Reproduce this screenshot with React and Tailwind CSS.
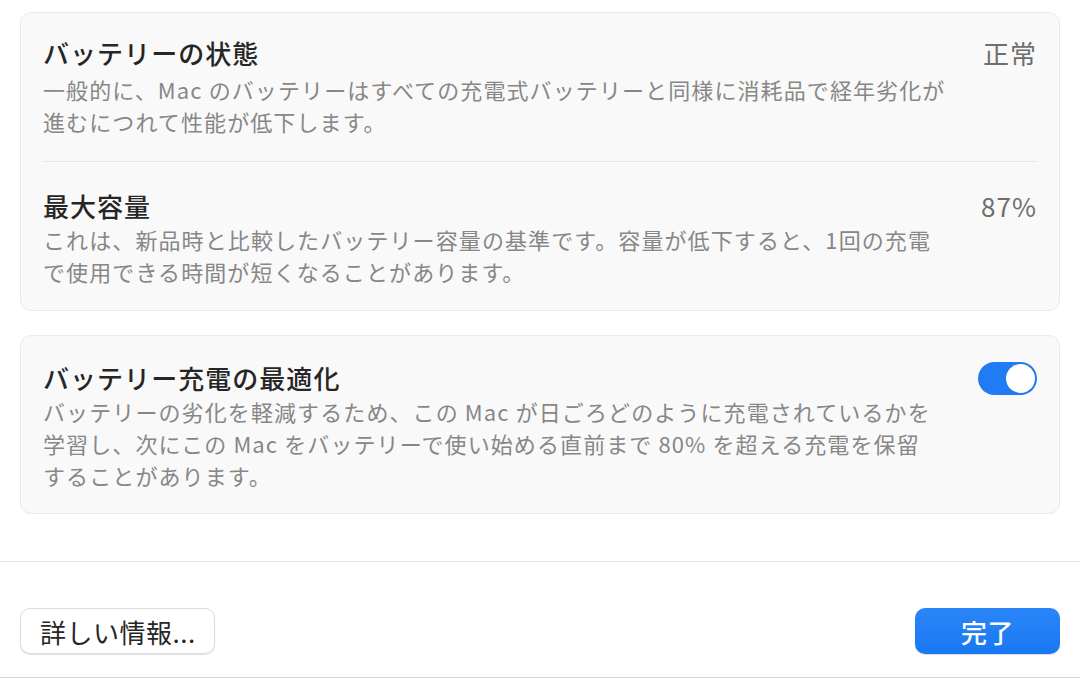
const FONT = { fontFamily: '"Noto Sans CJK JP", "Noto Sans", sans-serif' };

function Toggle() {
  return (
    <div className="flex h-[33px] w-[59px] shrink-0 items-center justify-end rounded-full bg-[#1f7cf4] p-[2px]">
      <div className="h-[29px] w-[29px] rounded-full bg-white shadow-[0_0_1px_rgba(0,0,0,0.25)]" />
    </div>
  );
}

function Lines({ lines, className }) {
  return (
    <div className={className}>
      {lines.map((l) => (
        <div key={l} className="whitespace-nowrap">{l}</div>
      ))}
    </div>
  );
}

export default function App() {
  const title = "text-[26px] leading-[32px] tracking-[0.04em] font-medium text-[#262626]";
  const desc = "text-[22px] leading-[32px] tracking-[0.05em] text-[#878787]";
  const value = "text-[26px] leading-[32px] tracking-[0.04em] text-[#6e6e6e]";

  return (
    <div className="flex h-[678px] w-[1080px] flex-col bg-white" style={FONT}>
      <div className="flex flex-col gap-[24px] px-5 pt-3">
        <div className="rounded-[11px] border border-[#e9e9e9] bg-[#f9f9f9] px-[22px]">
          <div className="pt-[24px] pb-[24px]">
            <div className="flex items-start justify-between">
              <div className={title}>バッテリーの状態</div>
              <div className={value}>正常</div>
            </div>
            <Lines
              className={desc + " mt-[4px]"}
              lines={[
                "一般的に、Mac のバッテリーはすべての充電式バッテリーと同様に消耗品で経年劣化が",
                "進むにつれて性能が低下します。",
              ]}
            />
          </div>
          <div className="border-t border-[#e6e6e6] pt-[28px] pb-[23px]">
            <div className="flex items-start justify-between">
              <div className={title}>最大容量</div>
              <div className={value}>87%</div>
            </div>
            <Lines
              className={desc + " mt-[1px]"}
              lines={[
                "これは、新品時と比較したバッテリー容量の基準です。容量が低下すると、1回の充電",
                "で使用できる時間が短くなることがあります。",
              ]}
            />
          </div>
        </div>

        <div className="rounded-[11px] border border-[#e9e9e9] bg-[#f9f9f9] px-[22px] pt-[26px] pb-[22px]">
          <div className="flex items-start justify-between">
            <div className={title}>バッテリー充電の最適化</div>
            <Toggle />
          </div>
          <Lines
            className={desc}
            lines={[
              "バッテリーの劣化を軽減するため、この Mac が日ごろどのように充電されているかを",
              "学習し、次にこの Mac をバッテリーで使い始める直前まで 80% を超える充電を保留",
              "することがあります。",
            ]}
          />
        </div>
      </div>

      <div className="mt-[47px] flex items-center justify-between border-t border-b border-[#e2e2e2] border-b-[#d6d6d6] px-5 pt-[46px] pb-[23px]">
        <button className="flex h-[46px] w-[195px] items-center rounded-[10px] border border-[#dcdcdc] bg-white pl-[19px] text-[26px] tracking-[0.02em] text-[#262626] shadow-[0_1px_1px_rgba(0,0,0,0.12)]">
          詳しい情報...
        </button>
        <button className="flex h-[46px] w-[145px] items-center justify-center rounded-[10px] bg-gradient-to-b from-[#2a86f8] to-[#1877f3] text-[26px] font-medium tracking-[0.02em] text-white shadow-[0_1px_1px_rgba(0,0,0,0.15)]">
          完了
        </button>
      </div>
    </div>
  );
}
